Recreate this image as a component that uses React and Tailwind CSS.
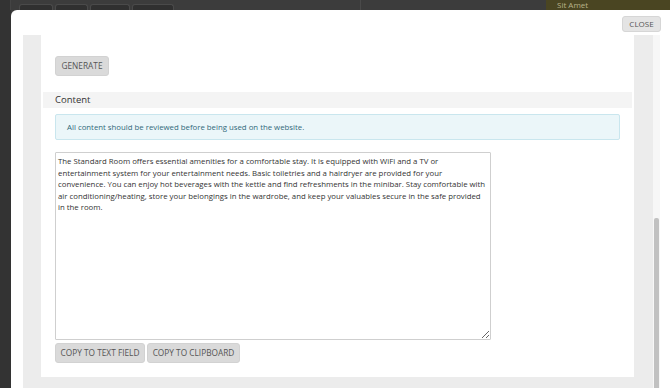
import React from 'react'

const description =
  'The Standard Room offers essential amenities for a comfortable stay. It is equipped with WiFi and a TV or entertainment system for your entertainment needs. Basic toiletries and a hairdryer are provided for your convenience. You can enjoy hot beverages with the kettle and find refreshments in the minibar. Stay comfortable with air conditioning/heating, store your belongings in the wardrobe, and keep your valuables secure in the safe provided in the room.'

const GrayButton = ({ children, className = '' }) => (
  <button
    className={
      'h-[20px] flex items-center justify-center whitespace-nowrap rounded-[3px] bg-[#dadada] border border-[#d2d2d2] text-[8.3px] uppercase text-[#555] leading-none ' +
      className
    }
  >
    {children}
  </button>
)

export default function App() {
  return (
    <div className="relative w-[670px] h-[388px] overflow-hidden bg-[#3c3c3c] font-['Open_Sans',sans-serif]">
      {/* page behind the modal */}
      <div className="flex h-[10px] items-end">
        <div className="w-[11px] h-full bg-[#333] border-r border-[#444]" />
        <div className="flex gap-[2px] pl-[8px] h-[6px]">
          <div className="w-[34px] rounded-t-[3px] bg-[#303030] border border-b-0 border-[#4a4a4a]" />
          <div className="w-[33px] rounded-t-[3px] bg-[#303030] border border-b-0 border-[#4a4a4a]" />
          <div className="w-[40px] rounded-t-[3px] bg-[#303030] border border-b-0 border-[#4a4a4a]" />
          <div className="w-[42px] rounded-t-[3px] bg-[#303030] border border-b-0 border-[#4a4a4a]" />
        </div>
        <div className="ml-[186px] h-full w-px bg-[#4a4a4a]" />
        <div className="ml-auto h-full w-[124px] bg-[#4a4522] pl-[11px] text-[8px] leading-[10px] text-[#b9b38a] overflow-hidden">
          Sit Amet
        </div>
      </div>
      <div className="absolute left-0 top-[10px] bottom-0 w-[11px] bg-[#333]" />

      {/* modal */}
      <div className="absolute left-[11px] top-[10px] right-0 bottom-0 rounded-tl-[6px] bg-white flex flex-col">
        <div className="flex justify-end h-[25px] pt-[6px] pr-[9px]">
          <button className="h-[16px] w-[39px] flex items-center justify-center rounded-[3px] bg-[#e4e4e4] border border-[#d6d6d6] text-[8px] uppercase text-[#555] leading-none">
            Close
          </button>
        </div>
        <div className="flex flex-1 ml-[12px] w-[637px]">
          <div className="flex-1 bg-[#ececec] px-[18px] pb-[11px] flex">
            <div className="flex-1 bg-white px-[2px] pt-[21px] pb-[14px] flex flex-col">
              <div className="pl-[12px] flex">
                <GrayButton className="w-[54px]">Generate</GrayButton>
              </div>
              <div className="mt-[16px] h-[16px] bg-[#f4f4f4] pl-[12px] text-[9.5px] leading-[16px] text-[#333]">
                Content
              </div>
              <div className="mx-[12px] mt-[6px] h-[26px] rounded-[2px] border border-[#c9e6ee] bg-[#ebf6f9] pl-[11px] text-[7.8px] leading-[24px] text-[#31697a]">
                All content should be reviewed before being used on the website.
              </div>
              <textarea
                readOnly
                value={description}
                className="block ml-[12px] mt-[12px] w-[436px] h-[188px] border border-[#cfcfcf] rounded-[1px] px-[2px] py-[3px] text-[7.8px] leading-[11.6px] text-[#333] outline-none"
              />
              <div className="flex gap-[2px] pl-[12px] mt-[3px]">
                <GrayButton className="w-[90px]">Copy to text field</GrayButton>
                <GrayButton className="w-[93px]">Copy to clipboard</GrayButton>
              </div>
            </div>
          </div>
          {/* scrollbar */}
          <div className="w-[8px] bg-[#f7f7f7] border-l border-[#ececec] pt-[183px] pl-[1px]">
            <div className="w-[5px] h-full bg-[#c1c1c1] rounded-t-[2px]" />
          </div>
        </div>
      </div>
    </div>
  )
}
